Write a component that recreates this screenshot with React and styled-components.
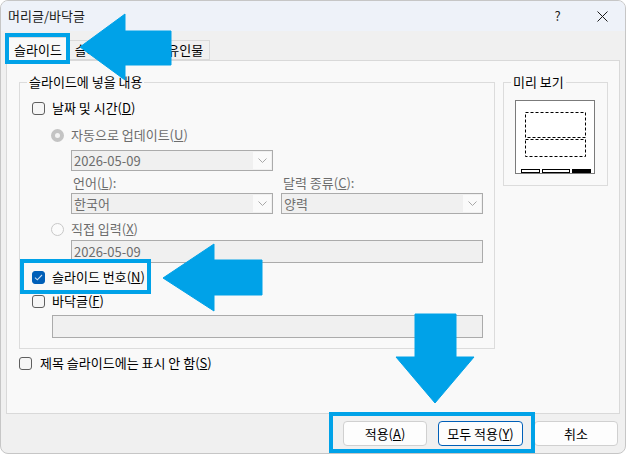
import React from 'react';
import styled, { createGlobalStyle } from 'styled-components';

const ACCENT = '#00a2e8';

const GlobalStyle = createGlobalStyle`
  html, body {
    margin: 0;
    padding: 0;
    background: #ffffff;
  }
  body {
    font-family: "Noto Sans CJK KR", "Noto Sans", sans-serif;
    font-size: 13px;
    line-height: 16px;
    color: #000;
  }
  * {
    box-sizing: border-box;
  }
`;

/* page frame, holds the dialog and the callouts drawn over it */
const Stage = styled.div`
  position: relative;
  width: 626px;
  height: 454px;
  overflow: hidden;
`;

const Dialog = styled.div`
  width: 626px;
  height: 454px;
  border: 1px solid #c6c6c6;
  border-radius: 8px;
  overflow: hidden;
  background: #f0f0f0;
  display: flex;
  flex-direction: column;
`;

const TitleBar = styled.div`
  height: 30px;
  flex: none;
  display: flex;
  align-items: center;
  padding-left: 7px;
  background: #eef2f9;
  color: #1a1a1a;
`;

const TitleText = styled.div`
  flex: 1;
`;

const TitleButton = styled.div`
  width: 45px;
  height: 30px;
  display: flex;
  align-items: center;
  justify-content: center;
  font-size: 13px;
  color: #1a1a1a;
`;

const Body = styled.div`
  padding: 6px 5px 0 5px;
`;

const TabStrip = styled.div`
  display: flex;
  align-items: flex-end;
  height: 23px;
  padding-left: 1px;
`;

const Tab = styled.div`
  position: relative;
  z-index: 1;
  display: flex;
  align-items: center;
  padding: 0 6px;
  height: ${p => (p.$active ? '24px' : '20px')};
  margin-bottom: ${p => (p.$active ? '-1px' : '0')};
  background: ${p => (p.$active ? '#f9f9f9' : '#f0f0f0')};
  border: 1px solid #d9d9d9;
  border-bottom: ${p => (p.$active ? 'none' : '1px solid #d9d9d9')};
  border-left: ${p => (p.$active ? '1px solid #d9d9d9' : 'none')};
`;

const Panel = styled.div`
  height: 354px;
  background: #f9f9f9;
  border: 1px solid #d9d9d9;
  padding: 13px 11px 0 12px;
`;

const TopRow = styled.div`
  display: flex;
  gap: 8px;
  align-items: flex-start;
`;

const Group = styled.fieldset`
  margin: 0;
  padding: 0;
  min-width: 0;
  width: ${p => p.$w}px;
  height: ${p => p.$h}px;
  border: 1px solid #dcdcdc;
`;

const Legend = styled.legend`
  margin-left: 7px;
  padding: 0 2px;
  line-height: 16px;
`;

const GroupBody = styled.div`
  padding-left: 12px;
`;

const Row = styled.div`
  display: flex;
  align-items: center;
  gap: ${p => p.$gap ?? 7}px;
  height: ${p => p.$h ?? 20}px;
  margin-top: ${p => p.$mt ?? 0}px;
  margin-left: ${p => p.$ml ?? 0}px;
  color: ${p => (p.$disabled ? '#6d6d6d' : '#000')};
`;

const Box = styled.span`
  width: 13px;
  height: 13px;
  flex: none;
  border-radius: 3px;
  border: 1px solid ${p => (p.$checked ? '#005fb8' : '#5f5f5f')};
  background: ${p => (p.$checked ? '#005fb8' : '#f6f6f6')};
  display: flex;
  align-items: center;
  justify-content: center;
`;

const Radio = styled.span`
  width: 13px;
  height: 13px;
  flex: none;
  border-radius: 50%;
  border: ${p => (p.$checked ? '4px solid #c4c4c4' : '1px solid #c8c8c8')};
  background: ${p => (p.$checked ? '#f4f4f4' : '#fbfbfb')};
`;

const Combo = styled.div`
  width: ${p => p.$w}px;
  height: ${p => p.$h ?? 21}px;
  display: flex;
  align-items: center;
  background: #f0f0f0;
  border: 1px solid #ababab;
  color: #6d6d6d;
  padding-left: 2px;
`;

const ComboText = styled.span`
  flex: 1;
`;

const DropButton = styled.span`
  width: 18px;
  height: 17px;
  margin-right: 1px;
  background: #fafafa;
  display: flex;
  align-items: center;
  justify-content: center;
`;

const FieldLabel = styled.span`
  width: ${p => p.$w}px;
  padding-left: 2px;
`;

const Pair = styled.div`
  display: flex;
  gap: 8px;
  margin-top: ${p => p.$mt}px;
  margin-left: 39px;
  color: #6d6d6d;
`;

const PreviewBox = styled.svg`
  display: block;
  margin: 10px 0 0 11px;
`;

const Footer = styled.div`
  display: flex;
  justify-content: flex-end;
  gap: 11px;
  padding: 7px 2px 0 0;
`;

const Button = styled.div`
  width: ${p => p.$w}px;
  height: 25px;
  display: flex;
  align-items: center;
  justify-content: center;
  border-radius: 4px;
  background: #fdfdfd;
  border: 1px solid ${p => (p.$primary ? '#005fb8' : '#d0d0d0')};
`;

/* callouts drawn over the dialog */
const Highlight = styled.div`
  position: absolute;
  z-index: 5;
  left: ${p => p.$x}px;
  top: ${p => p.$y}px;
  width: ${p => p.$w}px;
  height: ${p => p.$h}px;
  border: 4px solid ${ACCENT};
  pointer-events: none;
`;

const ArrowSvg = styled.svg`
  position: absolute;
  z-index: 5;
  left: ${p => p.$x}px;
  top: ${p => p.$y}px;
  overflow: visible;
  pointer-events: none;
`;

const Chevron = () => (
  <svg width="9" height="5" viewBox="0 0 9 5">
    <path d="M0.5 0.5 L4.5 4.5 L8.5 0.5" fill="none" stroke="#a8a8a8" strokeWidth="1" />
  </svg>
);

const Check = () => (
  <svg width="9" height="7" viewBox="0 0 9 7">
    <path d="M1 3.6 L3.3 5.8 L8 1" fill="none" stroke="#c9dcf0" strokeWidth="1.1" />
  </svg>
);

const Arrow = ({ x, y, w, h, points }) => (
  <ArrowSvg $x={x} $y={y} width={w} height={h} viewBox={`0 0 ${w} ${h}`}>
    <polygon points={points} fill={ACCENT} stroke={ACCENT} strokeWidth="1" strokeLinejoin="round" />
  </ArrowSvg>
);

const CheckRow = ({ checked, children, ...rest }) => (
  <Row {...rest}>
    <Box $checked={checked}>{checked && <Check />}</Box>
    <span>{children}</span>
  </Row>
);

const RadioRow = ({ checked, children, ...rest }) => (
  <Row $disabled {...rest}>
    <Radio $checked={checked} />
    <span>{children}</span>
  </Row>
);

const Select = ({ w, value }) => (
  <Combo $w={w}>
    <ComboText>{value}</ComboText>
    <DropButton>
      <Chevron />
    </DropButton>
  </Combo>
);

const Preview = () => (
  <PreviewBox width="80" height="74" viewBox="0 0 80 74">
    <rect x="0.5" y="0.5" width="79" height="73" fill="#fff" stroke="#7b7b7b" />
    <rect x="10.5" y="12.5" width="60" height="25" fill="none" stroke="#000" strokeDasharray="3 2" />
    <rect x="10.5" y="39.5" width="60" height="17" fill="none" stroke="#000" strokeDasharray="3 2" />
    <rect x="6.5" y="69.5" width="18" height="3" fill="#fff" stroke="#000" />
    <rect x="27.5" y="69.5" width="27" height="3" fill="#fff" stroke="#000" />
    <rect x="57" y="69" width="19" height="4" fill="#000" />
  </PreviewBox>
);

export default function App() {
  return (
    <Stage>
      <GlobalStyle />
      <Dialog>
        <TitleBar>
          <TitleText>머리글/바닥글</TitleText>
          <TitleButton>?</TitleButton>
          <TitleButton>
            <svg width="11" height="11" viewBox="0 0 11 11">
              <path d="M0.5 0.5 L10.5 10.5 M10.5 0.5 L0.5 10.5" stroke="#1a1a1a" strokeWidth="1" />
            </svg>
          </TitleButton>
        </TitleBar>

        <Body>
          <TabStrip>
            <Tab $active>슬라이드</Tab>
            <Tab>슬라이드 노트 및 유인물</Tab>
          </TabStrip>

          <Panel>
            <TopRow>
              <Group $w={476} $h={275}>
                <Legend>슬라이드에 넣을 내용</Legend>
                <GroupBody>
                  <CheckRow $mt={8}>
                    날짜 및 시간(<u>D</u>)
                  </CheckRow>
                  <RadioRow checked $mt={7} $ml={19}>
                    자동으로 업데이트(<u>U</u>)
                  </RadioRow>
                  <Row $mt={5} $ml={39} $h={21}>
                    <Select w={202} value="2026-05-09" />
                  </Row>
                  <Pair $mt={4}>
                    <FieldLabel $w={202}>언어(<u>L</u>):</FieldLabel>
                    <FieldLabel $w={202}>달력 종류(<u>C</u>):</FieldLabel>
                  </Pair>
                  <Pair $mt={2}>
                    <Select w={202} value="한국어" />
                    <Select w={202} value="양력" />
                  </Pair>
                  <RadioRow $mt={5} $ml={19}>
                    직접 입력(<u>X</u>)
                  </RadioRow>
                  <Row $mt={1} $ml={39} $h={23}>
                    <Combo $w={412} $h={23}>2026-05-09</Combo>
                  </Row>
                  <CheckRow checked $mt={4}>
                    슬라이드 번호(<u>N</u>)
                  </CheckRow>
                  <CheckRow $mt={4}>
                    바닥글(<u>F</u>)
                  </CheckRow>
                  <Row $mt={4} $ml={20} $h={23}>
                    <Combo $w={431} $h={23} />
                  </Row>
                </GroupBody>
              </Group>

              <Group $w={105} $h={112}>
                <Legend>미리 보기</Legend>
                <Preview />
              </Group>
            </TopRow>

            <CheckRow $mt={4} $gap={8}>
              제목 슬라이드에는 표시 안 함(<u>S</u>)
            </CheckRow>
          </Panel>

          <Footer>
            <Button $w={84}>적용(<u>A</u>)</Button>
            <Button $w={85} $primary>
              모두 적용(<u>Y</u>)
            </Button>
            <Button $w={84}>취소</Button>
          </Footer>
        </Body>
      </Dialog>

      <Highlight $x={5} $y={33} $w={65} $h={31} />
      <Highlight $x={20} $y={259} $w={131} $h={35} />
      <Highlight $x={329} $y={412} $w={206} $h={41} />

      <Arrow x={80} y={14} w={91} h={66} points="0,33 45,0 45,17 91,17 91,51 45,51 45,66" />
      <Arrow x={163} y={244} w={99} h={67} points="0,34 51,0 51,16 99,16 99,51 51,51 51,67" />
      <Arrow x={396} y={314} w={78} h={89} points="19,0 60,0 60,43 78,43 39,89 0,43 19,43" />
    </Stage>
  );
}
